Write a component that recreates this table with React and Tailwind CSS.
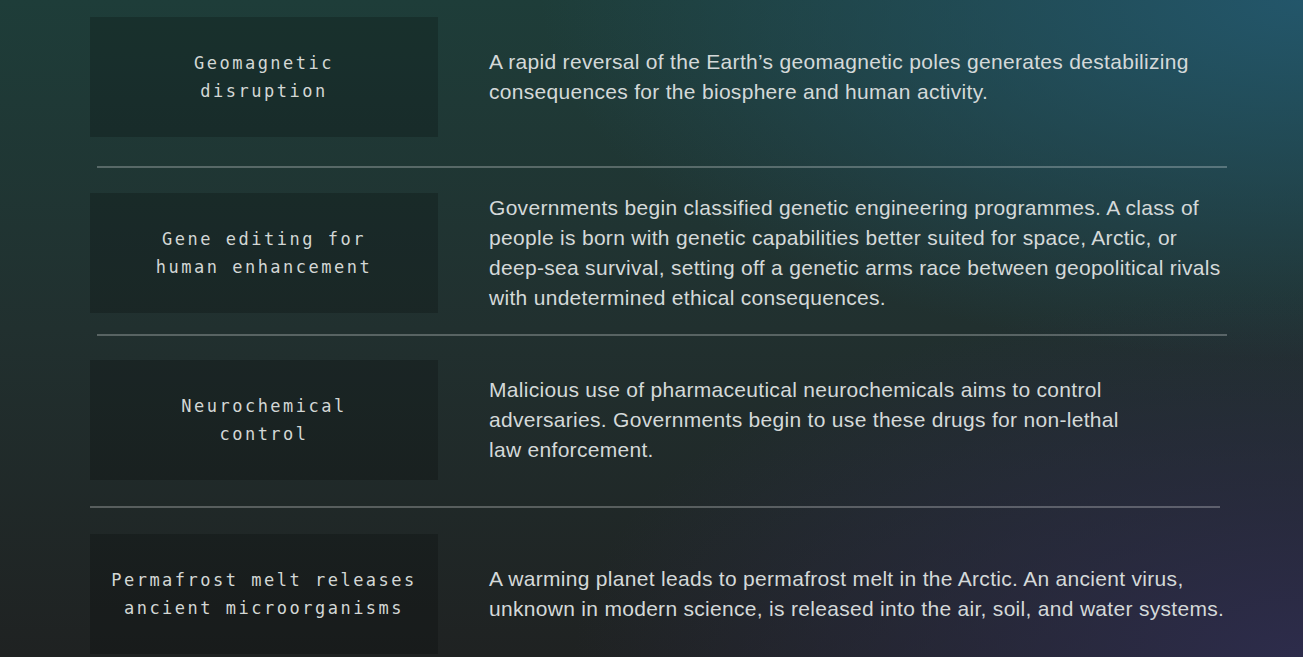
import React from 'react'

const rows = [
  {
    title: ['Geomagnetic', 'disruption'],
    body: [
      'A rapid reversal of the Earth\u2019s geomagnetic poles generates destabilizing',
      'consequences for the biosphere and human activity.',
    ],
    pad: 'pt-[17px] pb-[29px]',
    line: 'ml-[7px]',
  },
  {
    title: ['Gene editing for', 'human enhancement'],
    body: [
      'Governments begin classified genetic engineering programmes. A class of',
      'people is born with genetic capabilities better suited for space, Arctic, or',
      'deep-sea survival, setting off a genetic arms race between geopolitical rivals',
      'with undetermined ethical consequences.',
    ],
    pad: 'pt-[25px] pb-[21px]',
    line: 'ml-[7px]',
  },
  {
    title: ['Neurochemical', 'control'],
    body: [
      'Malicious use of pharmaceutical neurochemicals aims to control',
      'adversaries. Governments begin to use these drugs for non-lethal',
      'law enforcement.',
    ],
    pad: 'pt-[24px] pb-[26px]',
    line: 'ml-0',
  },
  {
    title: ['Permafrost melt releases', 'ancient microorganisms'],
    body: [
      'A warming planet leads to permafrost melt in the Arctic. An ancient virus,',
      'unknown in modern science, is released into the air, soil, and water systems.',
    ],
    pad: 'pt-[26px] pb-[28px]',
    line: null,
  },
]

const Row = ({ row }) => (
  <>
    <div className={`flex items-center ${row.pad}`}>
      <div className="w-[348px] h-[120px] shrink-0 bg-black/20 flex flex-col items-center justify-center text-[17px] leading-[28px] tracking-[2.5px] text-[#d3d7d5] font-['DejaVu_Sans_Mono','Liberation_Mono',monospace]">
        {row.title.map((t) => (
          <span key={t}>{t}</span>
        ))}
      </div>
      <p className="ml-[51px] text-[21px] leading-[30px] tracking-[0.3px] text-[#d4d9d9] whitespace-nowrap">
        {row.body.map((l) => (
          <span key={l} className="block">{l}</span>
        ))}
      </p>
    </div>
    {row.line && <div className={`h-[2px] w-[1130px] bg-white/25 ${row.line}`} />}
  </>
)

export default function App() {
  return (
    <div className="h-[657px] w-full overflow-hidden font-['Liberation_Sans',Arial,sans-serif] bg-[radial-gradient(ellipse_75%_70%_at_100%_0%,#23566a_0%,transparent_78%),radial-gradient(ellipse_70%_70%_at_100%_100%,#2d2c4b_0%,transparent_80%),linear-gradient(180deg,#1e3d39_0%,#21302f_50%,#1f2222_100%)]">
      <div className="pl-[90px]">
        {rows.map((row, i) => (
          <Row key={i} row={row} />
        ))}
      </div>
    </div>
  )
}
